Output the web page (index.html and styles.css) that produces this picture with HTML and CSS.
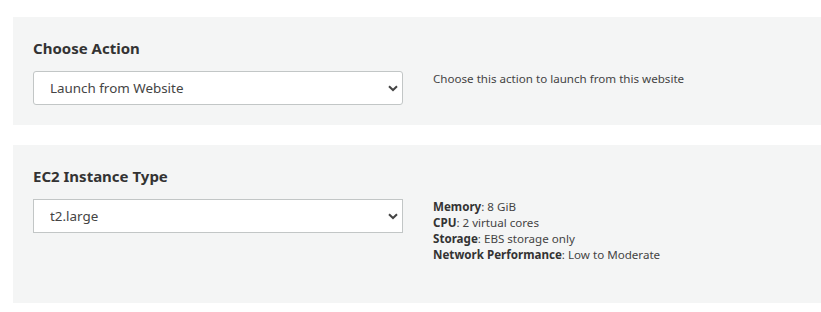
FILE: index.html
```html
<!DOCTYPE html>
<html>
<head>
<meta charset="utf-8">
<link rel="stylesheet" href="styles.css">
</head>
<body>
<div class="page">
  <section class="panel">
    <h2 class="panel-title">Choose Action</h2>
    <div class="row">
      <div class="select-wrap rounded">
        <select class="select"><option>Launch from Website</option></select>
        <svg class="chev" width="10" height="7" viewBox="0 0 10 7"><path d="M1 1.2 L5 5 L9 1.2" fill="none" stroke="#444" stroke-width="2"/></svg>
      </div>
      <p class="help">Choose this action to launch from this website</p>
    </div>
  </section>
  <section class="panel tall">
    <h2 class="panel-title">EC2 Instance Type</h2>
    <div class="row">
      <div class="select-wrap">
        <select class="select square"><option>t2.large</option></select>
        <svg class="chev" width="10" height="7" viewBox="0 0 10 7"><path d="M1 1.2 L5 5 L9 1.2" fill="none" stroke="#444" stroke-width="2"/></svg>
      </div>
      <div class="specs">
        <div><b>Memory</b>: 8 GiB</div>
        <div><b>CPU</b>: 2 virtual cores</div>
        <div><b>Storage</b>: EBS storage only</div>
        <div><b>Network Performance</b>: Low to Moderate</div>
      </div>
    </div>
  </section>
</div>
</body>
</html>
```
FILE: styles.css
```css
html, body { margin: 0; padding: 0; background: #fff; }
body { font-family: "Noto Sans", "Open Sans", sans-serif; color: #333; }
.page { padding: 17px 0 0 13px; display: flex; flex-direction: column; gap: 20px; }
.panel { background: #f4f5f5; padding: 20px 20px 20px 20px; }
.panel.tall { padding-bottom: 40px; }
.panel-title { margin: 0 0 12px 0; font-size: 15px; font-weight: 700; line-height: 22px; color: #333; }
.row { display: flex; gap: 30px; align-items: flex-start; }
.select-wrap { position: relative; width: 370px; height: 34px; flex: none; }
.select {
  appearance: none; -webkit-appearance: none;
  width: 100%; height: 34px; box-sizing: border-box;
  border: 1px solid #c2c6c6; background: #fff;
  font-family: "Noto Sans", "Open Sans", sans-serif; font-size: 13.4px; color: #444;
  padding: 0 30px 0 16px; margin: 0; outline: none;
}
.select-wrap.rounded .select { border-radius: 3px; }
.select.square { border-radius: 0; }
.chev { position: absolute; right: 5px; top: 14px; }
.help { margin: 0; font-size: 11.6px; line-height: 16px; color: #444; }
.specs { font-size: 11.6px; line-height: 16px; color: #444; }
.specs b { color: #333; }
```
